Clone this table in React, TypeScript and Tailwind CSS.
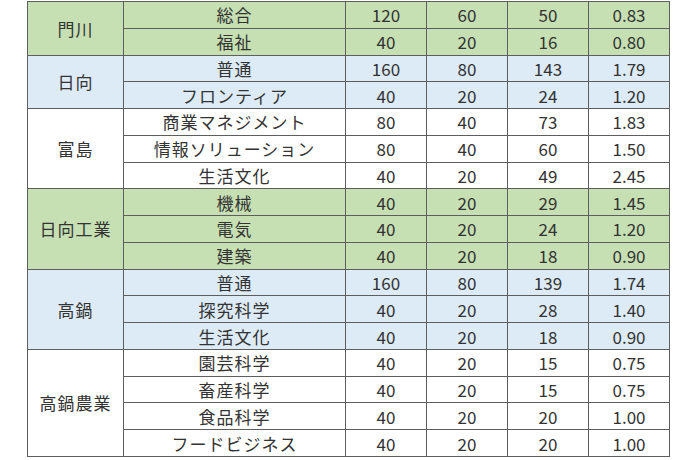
import React from "react";

type Course = [string, number, number, number, string];
type Group = { school: string; bg: string; span: string; courses: Course[] };

const groups: Group[] = [
  {
    school: "門川",
    bg: "bg-[#c6e0b4]",
    span: "row-span-2",
    courses: [
      ["総合", 120, 60, 50, "0.83"],
      ["福祉", 40, 20, 16, "0.80"],
    ],
  },
  {
    school: "日向",
    bg: "bg-[#ddebf7]",
    span: "row-span-2",
    courses: [
      ["普通", 160, 80, 143, "1.79"],
      ["フロンティア", 40, 20, 24, "1.20"],
    ],
  },
  {
    school: "富島",
    bg: "bg-white",
    span: "row-span-3",
    courses: [
      ["商業マネジメント", 80, 40, 73, "1.83"],
      ["情報ソリューション", 80, 40, 60, "1.50"],
      ["生活文化", 40, 20, 49, "2.45"],
    ],
  },
  {
    school: "日向工業",
    bg: "bg-[#c6e0b4]",
    span: "row-span-3",
    courses: [
      ["機械", 40, 20, 29, "1.45"],
      ["電気", 40, 20, 24, "1.20"],
      ["建築", 40, 20, 18, "0.90"],
    ],
  },
  {
    school: "高鍋",
    bg: "bg-[#ddebf7]",
    span: "row-span-3",
    courses: [
      ["普通", 160, 80, 139, "1.74"],
      ["探究科学", 40, 20, 28, "1.40"],
      ["生活文化", 40, 20, 18, "0.90"],
    ],
  },
  {
    school: "高鍋農業",
    bg: "bg-white",
    span: "row-span-4",
    courses: [
      ["園芸科学", 40, 20, 15, "0.75"],
      ["畜産科学", 40, 20, 15, "0.75"],
      ["食品科学", 40, 20, 20, "1.00"],
      ["フードビジネス", 40, 20, 20, "1.00"],
    ],
  },
];

export default function App() {
  return (
    <div
      className="w-[700px] h-[460px] bg-white overflow-hidden"
      style={{ fontFamily: '"Noto Sans CJK JP", "Noto Sans", sans-serif' }}
    >
      <div className="ml-[27px] mt-[1px] w-[643px] h-[456px] bg-[#5e5e5e] p-px grid gap-px grid-cols-[95px_221px_80px_80px_80px_80px] grid-rows-[repeat(17,minmax(0,1fr))] text-[17px] text-[#333] leading-none">
        {groups.map((g) => (
          <React.Fragment key={g.school + g.courses[0][0]}>
            <div
              className={`${g.span} col-start-1 ${g.bg} flex items-center justify-center tracking-[1px]`}
            >
              {g.school}
            </div>
            {g.courses.map((c, i) => (
              <React.Fragment key={i}>
                {c.map((v, j) => (
                  <div
                    key={j}
                    className={`${g.bg} flex items-center justify-center ${j === 0 ? "tracking-[1px]" : ""}`}
                  >
                    {v}
                  </div>
                ))}
              </React.Fragment>
            ))}
          </React.Fragment>
        ))}
      </div>
    </div>
  );
}
